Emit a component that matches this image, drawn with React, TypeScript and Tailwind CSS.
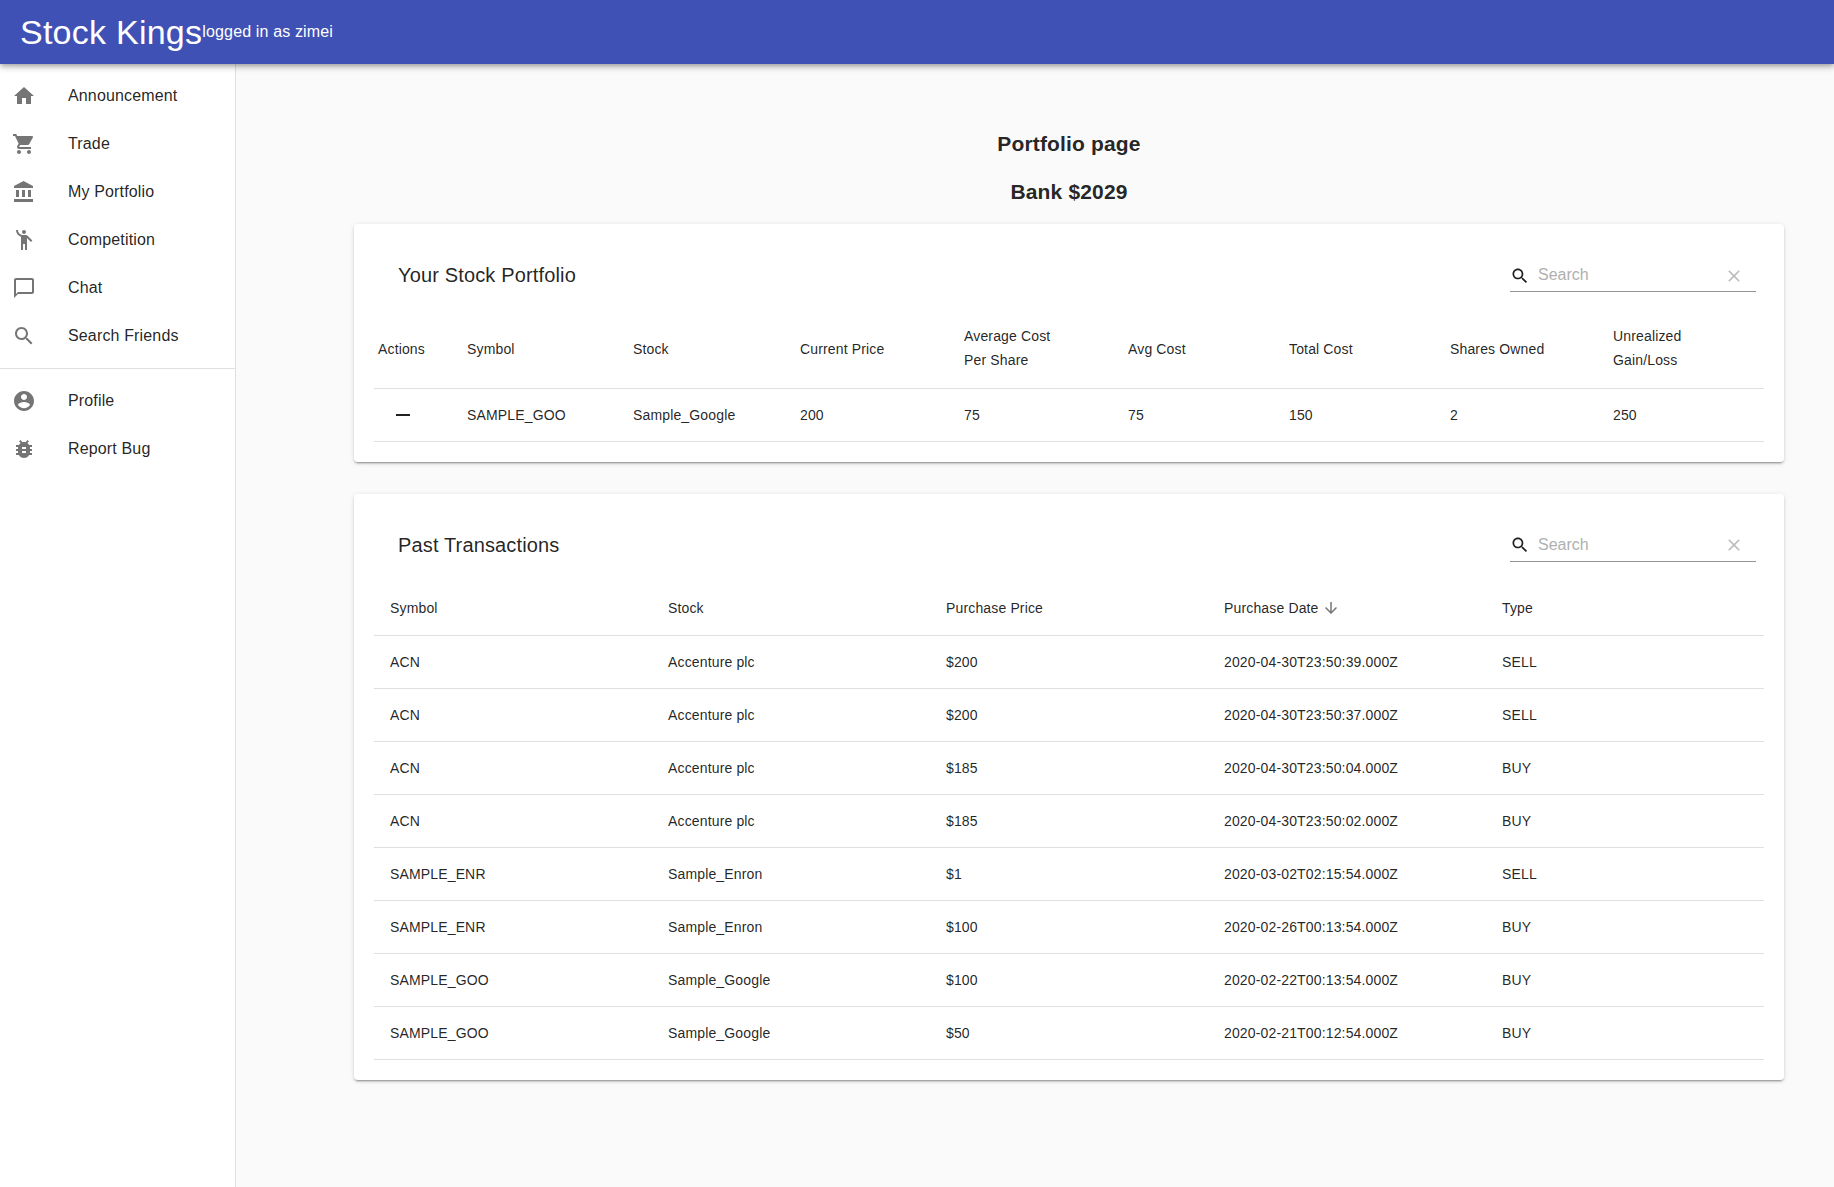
import { ReactNode } from "react";

const paths = {
  home: "M10 20v-6h4v6h5v-8h3L12 3 2 12h3v8z",
  cart: "M7 18c-1.1 0-1.99.9-1.99 2S5.9 22 7 22s2-.9 2-2-.9-2-2-2zM1 2v2h2l3.6 7.59-1.35 2.45c-.16.28-.25.61-.25.96 0 1.1.9 2 2 2h12v-2H7.42c-.14 0-.25-.11-.25-.25l.03-.12.9-1.63h7.45c.75 0 1.41-.41 1.75-1.03l3.58-6.49c.08-.14.12-.31.12-.48 0-.55-.45-1-1-1H5.21l-.94-2H1zm16 16c-1.1 0-1.99.9-1.99 2s.89 2 1.99 2 2-.9 2-2-.9-2-2-2z",
  bank: "M4 10v7h3v-7H4zm6 0v7h3v-7h-3zM2 22h19v-3H2v3zm14-12v7h3v-7h-3zm-4.5-9L2 6v2h19V6l-9.5-5z",
  people: "M12 2a2 2 0 1 0 0 4 2 2 0 0 0 0-4zM15.89 8.11C15.5 7.72 14.83 7 13.53 7h-2.54C8.24 6.99 6 4.75 6 2H4c0 3.16 2.11 5.84 5 6.71V22h2v-6h2v6h2V10.05L18.95 14l1.41-1.41-4.47-4.48z",
  chat: "M20 2H4c-1.1 0-2 .9-2 2v18l4-4h14c1.1 0 2-.9 2-2V4c0-1.1-.9-2-2-2zm0 14H6l-2 2V4h16v12z",
  search: "M15.5 14h-.79l-.28-.27C15.41 12.59 16 11.11 16 9.5 16 5.91 13.09 3 9.5 3S3 5.91 3 9.5 5.91 16 9.5 16c1.61 0 3.09-.59 4.23-1.57l.27.28v.79l5 4.99L20.49 19l-4.99-5zm-6 0C7.01 14 5 11.99 5 9.5S7.01 5 9.5 5 14 7.01 14 9.5 11.99 14 9.5 14z",
  profile: "M12 2C6.48 2 2 6.48 2 12s4.48 10 10 10 10-4.48 10-10S17.52 2 12 2zm0 3c1.66 0 3 1.34 3 3s-1.34 3-3 3-3-1.34-3-3 1.34-3 3-3zm0 14.2c-2.5 0-4.71-1.28-6-3.22.03-1.99 4-3.08 6-3.08 1.99 0 5.97 1.09 6 3.08-1.29 1.94-3.5 3.22-6 3.22z",
  bug: "M20 8h-2.81c-.45-.78-1.07-1.45-1.82-1.96L17 4.41 15.59 3l-2.17 2.17C12.96 5.06 12.49 5 12 5c-.49 0-.96.06-1.41.17L8.41 3 7 4.41l1.62 1.63C7.88 6.55 7.26 7.22 6.81 8H4v2h2.09c-.05.33-.09.66-.09 1v1H4v2h2v1c0 .34.04.67.09 1H4v2h2.81c1.04 1.79 2.97 3 5.19 3s4.15-1.21 5.19-3H20v-2h-2.09c.05-.33.09-.66.09-1v-1h2v-2h-2v-1c0-.34-.04-.67-.09-1H20V8zm-6 8h-4v-2h4v2zm0-4h-4v-2h4v2z",
  clear: "M19 6.41L17.59 5 12 10.59 6.41 5 5 6.41 10.59 12 5 17.59 6.41 19 12 13.41 17.59 19 19 17.59 13.41 12z",
  down: "M20 12l-1.41-1.41L13 16.17V4h-2v12.17l-5.58-5.59L4 12l8 8 8-8z",
  remove: "M19 13H5v-2h14v2z",
};

function Icon({ d, className }: { d: string; className: string }) {
  return (
    <svg viewBox="0 0 24 24" fill="currentColor" className={className}>
      <path d={d} />
    </svg>
  );
}

function NavItem({ icon, label }: { icon: string; label: string }) {
  return (
    <li className="flex h-12 items-center pl-3">
      <Icon d={icon} className="w-6 h-6 text-black/54" />
      <span className="ml-8 text-base tracking-[0.15px] text-black/87">{label}</span>
    </li>
  );
}

function SearchField() {
  return (
    <div className="flex h-8 w-[246px] items-center border-b border-black/42">
      <Icon d={paths.search} className="w-5 h-5 text-black/87" />
      <span className="ml-2 mb-[1px] flex-1 text-base text-[#b0b0b0]">Search</span>
      <Icon d={paths.clear} className="mr-[12px] w-5 h-5 text-black/26" />
    </div>
  );
}

function CardHeader({ title }: { title: string }) {
  return (
    <div className="flex h-[64px] items-center justify-between pl-6 pr-2">
      <h2 className="text-xl font-normal tracking-[0.15px] text-black/87 mb-[2px]">{title}</h2>
      <SearchField />
    </div>
  );
}

function Th({ children, className = "" }: { children: ReactNode; className?: string }) {
  return (
    <th className={`px-4 text-left align-middle text-sm font-normal leading-6 tracking-[0.15px] text-black/87 ${className}`}>
      {children}
    </th>
  );
}

function Td({ children }: { children: ReactNode }) {
  return <td className="px-4 text-sm tracking-[0.15px] text-black/87">{children}</td>;
}

const transactions = [
  ["ACN", "Accenture plc", "$200", "2020-04-30T23:50:39.000Z", "SELL"],
  ["ACN", "Accenture plc", "$200", "2020-04-30T23:50:37.000Z", "SELL"],
  ["ACN", "Accenture plc", "$185", "2020-04-30T23:50:04.000Z", "BUY"],
  ["ACN", "Accenture plc", "$185", "2020-04-30T23:50:02.000Z", "BUY"],
  ["SAMPLE_ENR", "Sample_Enron", "$1", "2020-03-02T02:15:54.000Z", "SELL"],
  ["SAMPLE_ENR", "Sample_Enron", "$100", "2020-02-26T00:13:54.000Z", "BUY"],
  ["SAMPLE_GOO", "Sample_Google", "$100", "2020-02-22T00:13:54.000Z", "BUY"],
  ["SAMPLE_GOO", "Sample_Google", "$50", "2020-02-21T00:12:54.000Z", "BUY"],
];

export default function App() {
  return (
    <div className="flex h-[1187px] flex-col overflow-hidden bg-[#fafafa] font-['Liberation_Sans',Arial,sans-serif]">
      <header className="relative z-10 flex h-16 shrink-0 items-center bg-[#3f51b5] pl-5 text-white shadow-[0_2px_4px_-1px_rgba(0,0,0,0.2),0_4px_5px_0_rgba(0,0,0,0.14),0_1px_10px_0_rgba(0,0,0,0.12)]">
        <span className="text-[34px] leading-none tracking-[0.25px]">Stock Kings</span>
        <span className="text-base tracking-[0.15px]">logged in as zimei</span>
      </header>

      <div className="flex flex-1">
        <nav className="w-[236px] shrink-0 border-r border-[#e0e0e0] bg-white">
          <ul className="py-2">
            <NavItem icon={paths.home} label="Announcement" />
            <NavItem icon={paths.cart} label="Trade" />
            <NavItem icon={paths.bank} label="My Portfolio" />
            <NavItem icon={paths.people} label="Competition" />
            <NavItem icon={paths.chat} label="Chat" />
            <NavItem icon={paths.search} label="Search Friends" />
          </ul>
          <div className="h-px bg-[#e0e0e0]" />
          <ul className="py-2">
            <NavItem icon={paths.profile} label="Profile" />
            <NavItem icon={paths.bug} label="Report Bug" />
          </ul>
        </nav>

        <main className="flex-1 pl-[118px] pr-[50px] pt-14">
          <h1 className="h-12 text-center text-[21px] font-bold leading-12 tracking-[0.15px] text-black/87">Portfolio page</h1>
          <h1 className="h-12 text-center text-[21px] font-bold leading-12 tracking-[0.15px] text-black/87">Bank $2029</h1>

          <section className="mt-2 rounded bg-white p-5 shadow-[0_3px_1px_-2px_rgba(0,0,0,0.2),0_2px_2px_0_rgba(0,0,0,0.14),0_1px_5px_0_rgba(0,0,0,0.12)]">
            <CardHeader title="Your Stock Portfolio" />
            <table className="w-full table-fixed border-collapse">
              <colgroup>
                <col className="w-[77px]" />
                <col className="w-[166px]" />
                <col className="w-[167px]" />
                <col className="w-[164px]" />
                <col className="w-[164px]" />
                <col className="w-[161px]" />
                <col className="w-[161px]" />
                <col className="w-[163px]" />
                <col />
              </colgroup>
              <thead>
                <tr className="h-[80px] border-b border-[#e0e0e0]">
                  <th className="pl-1 pt-[2px] text-left text-sm font-normal tracking-[0.15px] text-black/87">Actions</th>
                  <Th className="pt-[2px]">Symbol</Th>
                  <Th className="pt-[2px]">Stock</Th>
                  <Th className="pt-[2px]">Current Price</Th>
                  <Th>
                    Average Cost
                    <br />
                    Per Share
                  </Th>
                  <Th className="pt-[2px]">Avg Cost</Th>
                  <Th className="pt-[2px]">Total Cost</Th>
                  <Th className="pt-[2px]">Shares Owned</Th>
                  <Th>Unrealized Gain/Loss</Th>
                </tr>
              </thead>
              <tbody>
                <tr className="h-[53px] border-b border-[#e0e0e0]">
                  <td className="pl-[17px]">
                    <Icon d={paths.remove} className="w-6 h-6 text-black/87" />
                  </td>
                  <Td>SAMPLE_GOO</Td>
                  <Td>Sample_Google</Td>
                  <Td>200</Td>
                  <Td>75</Td>
                  <Td>75</Td>
                  <Td>150</Td>
                  <Td>2</Td>
                  <Td>250</Td>
                </tr>
              </tbody>
            </table>
          </section>

          <section className="mt-8 rounded bg-white p-5 shadow-[0_3px_1px_-2px_rgba(0,0,0,0.2),0_2px_2px_0_rgba(0,0,0,0.14),0_1px_5px_0_rgba(0,0,0,0.12)]">
            <CardHeader title="Past Transactions" />
            <table className="mt-1 w-full table-fixed border-collapse">
              <thead>
                <tr className="h-[54px] border-b border-[#e0e0e0]">
                  <Th>Symbol</Th>
                  <Th>Stock</Th>
                  <Th>Purchase Price</Th>
                  <Th>
                    <span className="flex items-center">
                      Purchase Date
                      <Icon d={paths.down} className="ml-[3px] w-[18px] h-[18px] text-black/54" />
                    </span>
                  </Th>
                  <Th>Type</Th>
                </tr>
              </thead>
              <tbody>
                {transactions.map((row) => (
                  <tr key={row[3]} className="h-[53px] border-b border-[#e0e0e0]">
                    {row.map((cell, i) => (
                      <Td key={i}>{cell}</Td>
                    ))}
                  </tr>
                ))}
              </tbody>
            </table>
          </section>
        </main>
      </div>
    </div>
  );
}
